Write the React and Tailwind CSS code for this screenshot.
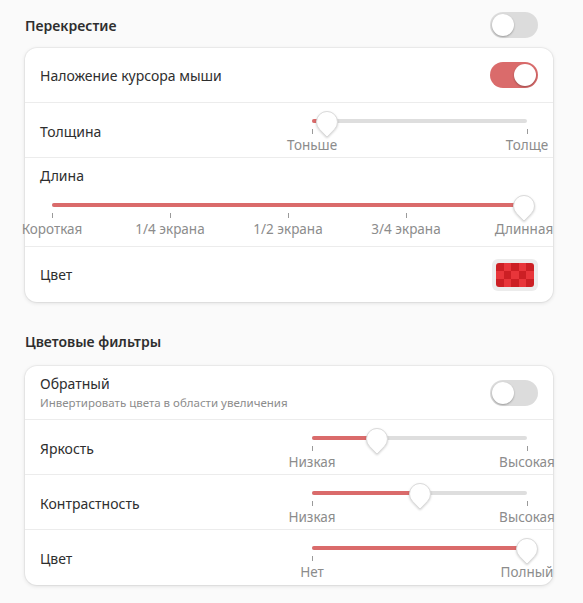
import React from 'react';

function Toggle({ on }) {
  return (
    <div
      className={`relative h-[26px] w-[48px] rounded-full ${on ? 'bg-[#da6b6b]' : 'bg-[#dcdcdc]'}`}
    >
      <div
        className={`absolute top-[2px] h-[22px] w-[22px] rounded-full bg-white shadow-[0_1px_2px_rgba(0,0,0,0.3)] ${
          on ? 'left-[24px]' : 'left-[2px]'
        }`}
      />
    </div>
  );
}

function Thumb() {
  return (
    <svg width="26" height="32" viewBox="0 0 26 32" className="drop-shadow-[0_1px_1px_rgba(0,0,0,0.18)]">
      <path
        d="M13 28 L5.6 20.4 A10.5 10.5 0 1 1 20.4 20.4 Z"
        fill="#fff"
        stroke="#dadada"
        strokeWidth="1"
      />
    </svg>
  );
}

function Slider({ value, marks, width }) {
  return (
    <div className="relative h-[55px]" style={{ width }}>
      <div className="absolute left-0 right-0 top-[16px] h-[4px] rounded-full bg-[#dedede]" />
      <div
        className="absolute left-0 top-[16px] h-[4px] rounded-full bg-[#da6b6b]"
        style={{ width: `${value * 100}%` }}
      />
      {marks.map((m) => (
        <React.Fragment key={m.label}>
          <div
            className="absolute top-[26px] h-[5px] w-px bg-[#9a9a9a]"
            style={{ left: `${m.at * 100}%` }}
          />
          <div
            className="absolute top-[32px] -translate-x-1/2 whitespace-nowrap text-[13.5px] leading-[20px] text-[#8c8c8c]"
            style={{ left: `${m.at * 100}%` }}
          >
            {m.label}
          </div>
        </React.Fragment>
      ))}
      <div className="absolute top-[6px] -translate-x-1/2" style={{ left: `${value * 100}%` }}>
        <Thumb />
      </div>
    </div>
  );
}

function Row({ children, last, className = '' }) {
  return (
    <div className={`flex items-center ${last ? '' : 'border-b border-[#ececec]'} ${className}`}>
      {children}
    </div>
  );
}

function SliderRow({ label, value, lo, hi, last }) {
  return (
    <Row last={last} className="h-[55px] justify-between pl-[15px] pr-[26px]">
      <span className="pt-[2px] text-[14px]">{label}</span>
      <Slider
        width={215}
        value={value}
        marks={[
          { at: 0, label: lo },
          { at: 1, label: hi },
        ]}
      />
    </Row>
  );
}

function Card({ children }) {
  return (
    <div className="rounded-[12px] bg-white shadow-[0_0_0_1px_rgba(0,0,0,0.04),0_1px_4px_rgba(0,0,0,0.12)]">
      {children}
    </div>
  );
}

function Swatch() {
  const cells = [];
  for (let r = 0; r < 3; r++) {
    for (let c = 0; c < 5; c++) {
      cells.push(
        <div key={`${r}-${c}`} className={(r + c) % 2 === 0 ? 'bg-[#cc1f24]' : 'bg-[#e8353a]'} />
      );
    }
  }
  return (
    <div className="rounded-[6px] bg-[#ececec] p-[4px]">
      <div className="grid h-[24px] w-[38px] grid-cols-5 grid-rows-3 overflow-hidden rounded-[3px]">
        {cells}
      </div>
    </div>
  );
}

export default function App() {
  return (
    <div
      className="min-h-[603px] w-[583px] bg-[#fafafa] pl-[25px] pr-[30px] pt-[12px] text-[#2e2e2e]"
      style={{ fontFamily: '"Noto Sans", "Open Sans", sans-serif' }}
    >
      <div className="flex h-[26px] items-center justify-between pr-[15px]">
        <h2 className="text-[14px] font-semibold">Перекрестие</h2>
        <Toggle on={false} />
      </div>

      <div className="mt-[10px]">
        <Card>
          <Row className="h-[55px] justify-between px-[15px]">
            <span className="text-[14px]">Наложение курсора мыши</span>
            <Toggle on />
          </Row>
          <SliderRow label="Толщина" value={0.07} lo="Тоньше" hi="Толще" />
          <div className="border-b border-[#ececec] px-[15px] pb-[4px] pt-[7px]">
            <div className="text-[14px] leading-[22px]">Длина</div>
            <div className="pl-[12px] pr-[14px]">
              <Slider
                width="100%"
                value={1}
                marks={[
                  { at: 0, label: 'Короткая' },
                  { at: 0.25, label: '1/4 экрана' },
                  { at: 0.5, label: '1/2 экрана' },
                  { at: 0.75, label: '3/4 экрана' },
                  { at: 1, label: 'Длинная' },
                ]}
              />
            </div>
          </div>
          <Row last className="h-[55px] justify-between px-[15px]">
            <span className="text-[14px]">Цвет</span>
            <Swatch />
          </Row>
        </Card>
      </div>

      <h2 className="mt-[27px] text-[14px] font-semibold leading-[26px]">Цветовые фильтры</h2>

      <div className="mt-[11px]">
        <Card>
          <Row className="h-[54px] justify-between px-[15px]">
            <div className="flex flex-col">
              <span className="text-[14px] leading-[20px]">Обратный</span>
              <span className="text-[11.5px] leading-[18px] text-[#8c8c8c]">
                Инвертировать цвета в области увеличения
              </span>
            </div>
            <Toggle on={false} />
          </Row>
          <SliderRow label="Яркость" value={0.3} lo="Низкая" hi="Высокая" />
          <SliderRow label="Контрастность" value={0.5} lo="Низкая" hi="Высокая" />
          <SliderRow label="Цвет" value={1} lo="Нет" hi="Полный" last />
        </Card>
      </div>
    </div>
  );
}
